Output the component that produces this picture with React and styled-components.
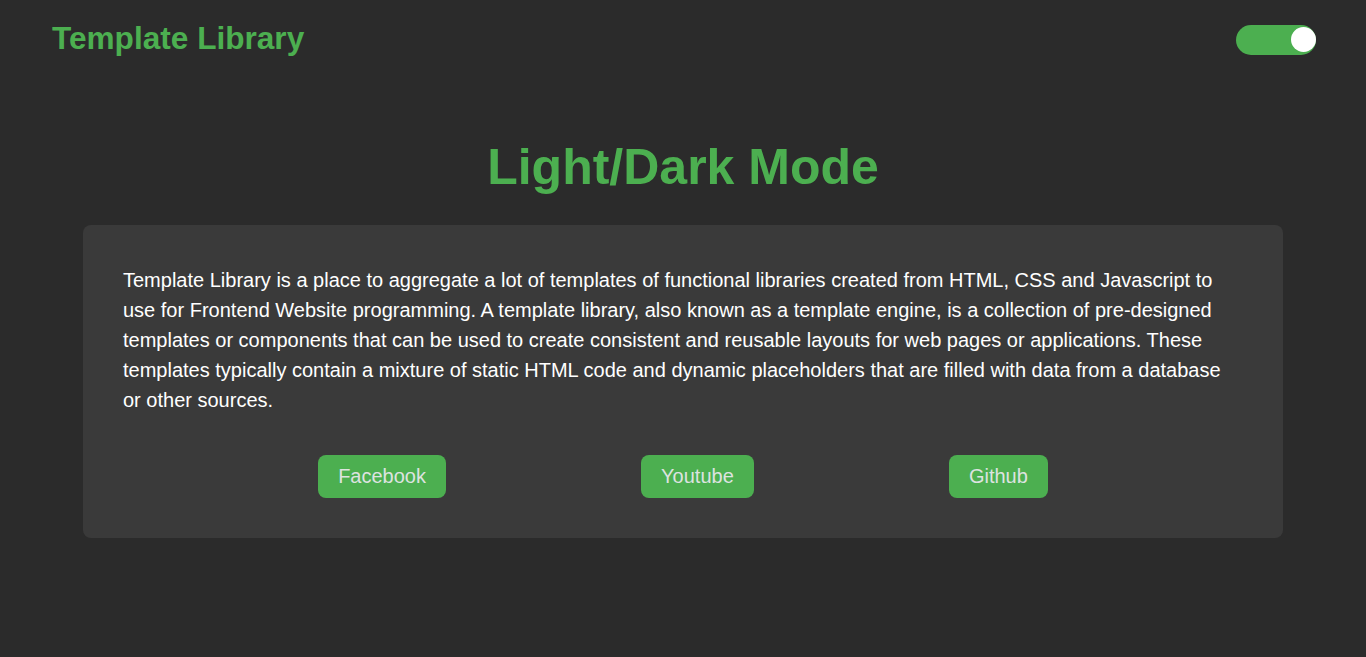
import React, { useState } from 'react'
import styled, { createGlobalStyle } from 'styled-components'

const GlobalStyle = createGlobalStyle`
  body {
    margin: 0;
    background: #2b2b2b;
    font-family: "Liberation Sans", Arial, sans-serif;
  }
`

const Header = styled.header`
  display: flex;
  align-items: center;
  justify-content: space-between;
  padding: 20px 50px 20px 52px;
`

const Logo = styled.h1`
  margin: 0;
  font-size: 31.6px;
  font-weight: bold;
  color: #4caf50;
`

const Toggle = styled.button`
  position: relative;
  width: 80px;
  height: 30px;
  margin-top: 2px;
  padding: 0;
  border: none;
  border-radius: 15px;
  background: ${props => (props.on ? '#4caf50' : '#ccc')};
  cursor: pointer;
`

const Knob = styled.span`
  position: absolute;
  top: 2.5px;
  ${props => (props.on ? 'right: 0;' : 'left: 0;')}
  width: 25px;
  height: 25px;
  border-radius: 50%;
  background: #fff;
`

const Main = styled.main`
  padding: 0 83px;
`

const Title = styled.h2`
  margin: 61px 0 29px;
  text-align: center;
  font-size: 50px;
  font-weight: bold;
  color: #4caf50;
`

const Card = styled.section`
  max-width: 1200px;
  margin: 0 auto;
  padding: 40px;
  box-sizing: border-box;
  border-radius: 8px;
  background: #3a3a3a;
`

const Text = styled.p`
  margin: 0 0 40px;
  font-size: 20px;
  line-height: 30px;
  color: #fff;
`

const Links = styled.div`
  display: flex;
  justify-content: space-evenly;
`

const LinkButton = styled.a`
  padding: 10px 20px;
  border-radius: 8px;
  background: #4caf50;
  color: #dde3e0;
  font-size: 20px;
  line-height: 23px;
  text-decoration: none;
`

const App = () => {
  const [dark, setDark] = useState(true)

  return (
    <>
      <GlobalStyle />
      <Header>
        <Logo>Template Library</Logo>
        <Toggle on={dark ? 1 : 0} onClick={() => setDark(!dark)}>
          <Knob on={dark ? 1 : 0} />
        </Toggle>
      </Header>
      <Main>
        <Title>Light/Dark Mode</Title>
        <Card>
          <Text>
            Template Library is a place to aggregate a lot of templates of functional libraries created from HTML, CSS and Javascript to use for Frontend Website programming. A template library, also known as a template engine, is a collection of pre-designed templates or components that can be used to create consistent and reusable layouts for web pages or applications. These templates typically contain a mixture of static HTML code and dynamic placeholders that are filled with data from a database or other sources.
          </Text>
          <Links>
            <LinkButton href="#">Facebook</LinkButton>
            <LinkButton href="#">Youtube</LinkButton>
            <LinkButton href="#">Github</LinkButton>
          </Links>
        </Card>
      </Main>
    </>
  )
}

export default App
